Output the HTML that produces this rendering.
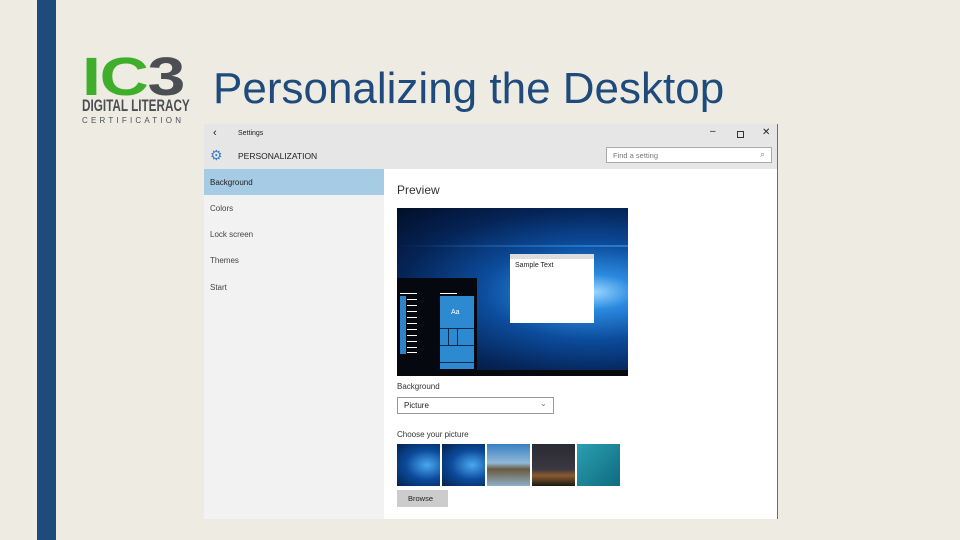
<!DOCTYPE html><html><head><style>
body{margin:0;width:960px;height:540px;background:#eeece2;position:relative;overflow:hidden;font-family:"Liberation Sans",sans-serif}
.a{position:absolute}
.s{font-size:8px;color:#222}
.l{position:absolute;height:1px;background:#fff}
</style></head><body>
<div class="a" style="left:81px;top:0;width:0;height:0"></div>
<div class="a" style="left:37px;top:0;width:19px;height:540px;background:#1f4a7c"></div>
<div class="a" style="left:82px;top:50px;font:bold 54px/54px 'Liberation Sans';letter-spacing:-1px;transform:scaleX(1.26);transform-origin:left top;white-space:nowrap"><span style="color:#3fae2a">IC</span><span style="color:#4b4f54">3</span></div>
<div class="a" style="left:82px;top:97px;font:bold 17px/17px 'Liberation Sans';color:#4b4f54;transform:scaleX(0.69);transform-origin:left;white-space:nowrap">DIGITAL LITERACY</div>
<div class="a" style="left:82px;top:117px;font:8px/8px 'Liberation Sans';color:#4b4f54;letter-spacing:3.2px;white-space:nowrap">CERTIFICATION</div>
<div class="a" style="left:213px;top:64px;font:44px 'Liberation Sans';color:#1f4a7c;white-space:nowrap">Personalizing the Desktop</div>
<div class="a" style="left:204px;top:124px;width:574px;height:395px;background:#fff;border-right:1px solid #2b7bd0;box-sizing:border-box"></div>
<div class="a" style="left:204px;top:124px;width:573px;height:45px;background:#e6e6e6"></div>
<div class="a s" style="left:213px;top:127px;font-size:11px">‹</div>
<div class="a s" style="left:238px;top:130px;font-size:7px">Settings</div>
<div class="a s" style="left:710px;top:126px;font-size:10px">–</div>
<div class="a" style="left:737px;top:131px;width:5px;height:5px;border:1px solid #333"></div>
<div class="a s" style="left:762px;top:127px;font-size:10px">✕</div>
<div class="a" style="left:210px;top:147px;font-size:14px;color:#3b7fc8">⚙</div>
<div class="a s" style="left:238px;top:151px;font-size:8.5px">PERSONALIZATION</div>
<div class="a" style="left:606px;top:147px;width:166px;height:16px;border:1px solid #aaa;background:#fff;box-sizing:border-box"></div>
<div class="a s" style="left:613px;top:151px;font-size:7.5px;color:#777">Find a setting</div>
<div class="a s" style="left:760px;top:149px;font-size:9px;color:#888">⌕</div>
<div class="a" style="left:204px;top:169px;width:180px;height:350px;background:#f2f2f2"></div>
<div class="a" style="left:204px;top:169px;width:180px;height:26px;background:#a6cbe4"></div>
<div class="a s" style="left:210px;top:178px">Background</div>
<div class="a s" style="left:210px;top:204px;color:#444">Colors</div>
<div class="a s" style="left:210px;top:230px;color:#444">Lock screen</div>
<div class="a s" style="left:210px;top:256px;color:#444">Themes</div>
<div class="a s" style="left:210px;top:283px;color:#444">Start</div>
<div class="a s" style="left:397px;top:183px;font-size:12px;color:#333">Preview</div>
<div class="a" style="left:397px;top:208px;width:231px;height:168px;background:radial-gradient(ellipse at 85% 50%,#9ad6ff 0%,#2a8ae0 15%,#0c4c9c 40%,#052456 70%,#020e28 100%)"></div>
<div class="a" style="left:397px;top:245px;width:231px;height:2px;background:linear-gradient(90deg,transparent,#3a8fe0);opacity:.7"></div>
<div class="a" style="left:510px;top:254px;width:84px;height:69px;background:#fff;border-top:5px solid #ddd;box-sizing:border-box"></div>
<div class="a s" style="left:515px;top:262px;font-size:7px">Sample Text</div>
<div class="a" style="left:397px;top:278px;width:80px;height:92px;background:#05090f"></div>
<div class="a" style="left:400px;top:296px;width:6px;height:58px;background:#2e84c6"></div>
<div class="l" style="left:400px;top:293px;width:17px"></div>
<div class="l" style="left:407px;top:299px;width:10px"></div><div class="l" style="left:407px;top:305px;width:10px"></div>
<div class="l" style="left:407px;top:311px;width:10px"></div><div class="l" style="left:407px;top:317px;width:10px"></div>
<div class="l" style="left:407px;top:323px;width:10px"></div><div class="l" style="left:407px;top:329px;width:10px"></div>
<div class="l" style="left:407px;top:335px;width:10px"></div><div class="l" style="left:407px;top:341px;width:10px"></div>
<div class="l" style="left:407px;top:347px;width:10px"></div><div class="l" style="left:407px;top:352px;width:10px"></div>
<div class="l" style="left:440px;top:293px;width:17px"></div>
<div class="a" style="left:440px;top:296px;width:34px;height:73px;background:#2e8ad0"></div>
<div class="a" style="left:440px;top:328px;width:34px;height:1px;background:#0a2a50"></div>
<div class="a" style="left:440px;top:345px;width:34px;height:1px;background:#0a2a50"></div>
<div class="a" style="left:440px;top:362px;width:34px;height:1px;background:#0a2a50"></div>
<div class="a" style="left:457px;top:328px;width:1px;height:17px;background:#0a2a50"></div>
<div class="a" style="left:448px;top:328px;width:1px;height:17px;background:#0a2a50"></div>
<div class="a" style="left:451px;top:309px;font-size:7px;color:#fff">Aa</div>
<div class="a" style="left:397px;top:370px;width:231px;height:6px;background:#05080d"></div>
<div class="a s" style="left:397px;top:382px;color:#333">Background</div>
<div class="a" style="left:397px;top:397px;width:157px;height:17px;border:1px solid #999;box-sizing:border-box"></div>
<div class="a s" style="left:404px;top:401px">Picture</div>
<div class="a s" style="left:540px;top:399px;color:#777">⌄</div>
<div class="a s" style="left:397px;top:430px;color:#333">Choose your picture</div>
<div class="a" style="left:397px;top:444px;width:43px;height:42px;background:radial-gradient(ellipse at 70% 50%,#4aa8f0,#0b4a9a 50%,#04224e)"></div>
<div class="a" style="left:442px;top:444px;width:43px;height:42px;background:radial-gradient(ellipse at 70% 50%,#4aa8f0,#0b4a9a 50%,#04224e)"></div>
<div class="a" style="left:487px;top:444px;width:43px;height:42px;background:linear-gradient(#3a7fc0,#8fb9d8 45%,#6a5a40 60%,#8fb0c8)"></div>
<div class="a" style="left:532px;top:444px;width:43px;height:42px;background:linear-gradient(#2a2a35,#3a3840 60%,#8a5a30 75%,#1a1a15)"></div>
<div class="a" style="left:577px;top:444px;width:43px;height:42px;background:linear-gradient(135deg,#2aa0b0,#0f6a80)"></div>
<div class="a" style="left:397px;top:490px;width:51px;height:17px;background:#ccc"></div>
<div class="a s" style="left:408px;top:494px;font-size:7.5px">Browse</div>
</body></html>
